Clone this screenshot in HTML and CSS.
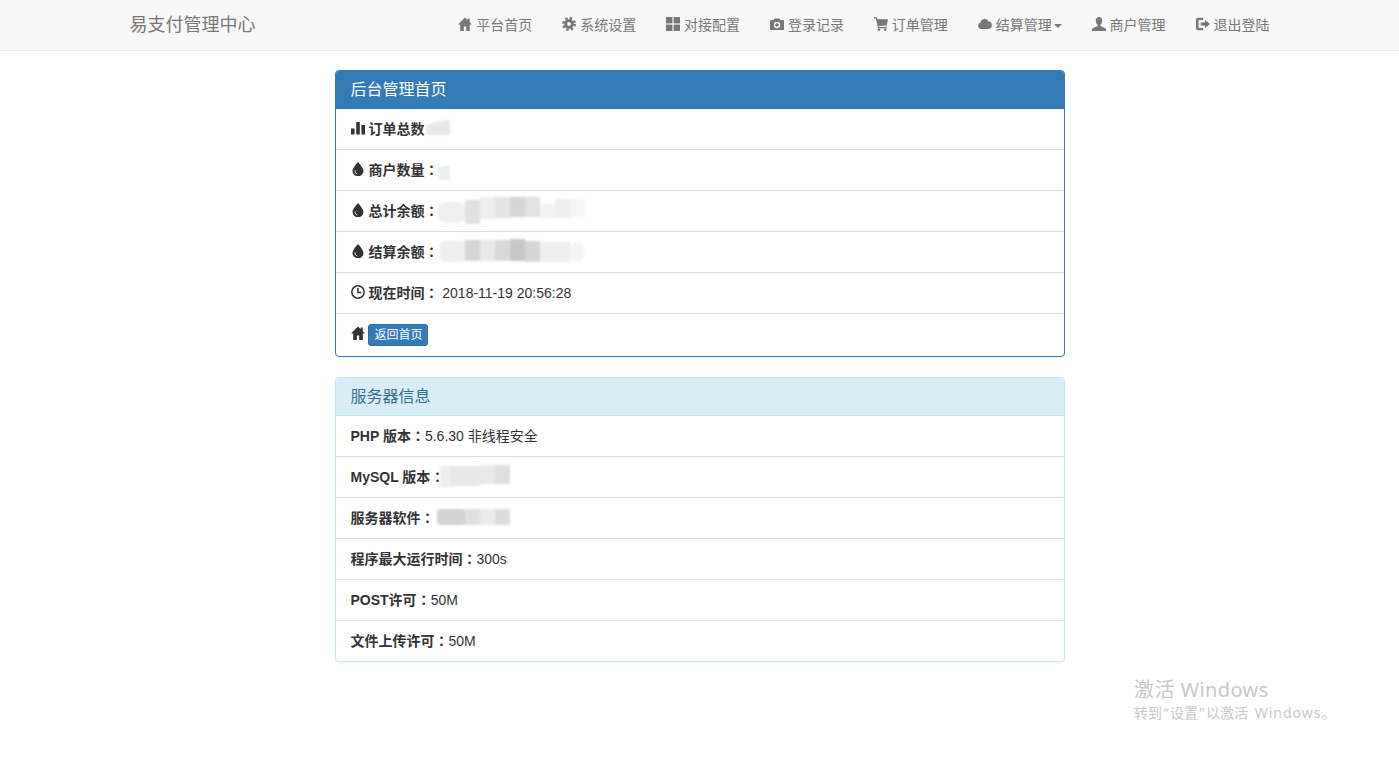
FILE: index.html
```html
<!DOCTYPE html>
<html lang="zh-CN">
<head>
<meta charset="utf-8">
<title>易支付管理中心</title>
<link rel="stylesheet" href="styles.css">
</head>
<body>
<svg class="defs" aria-hidden="true">
  <symbol id="i-home" viewBox="0 0 14 14"><path d="M7 .5 0 7.500h2.200V14h3.600V9.500h2.400V14h3.600V7.500H14l-2.300-2.300V1.500H9.700v1.700z"/></symbol>
  <symbol id="i-cog" viewBox="0 0 14 14"><circle cx="7" cy="7" r="3.400" fill="none" stroke="currentColor" stroke-width="2.900"/><circle cx="7" cy="7" r="5.700" fill="none" stroke="currentColor" stroke-width="2.500" stroke-dasharray="2.400 2.080"/></symbol>
  <symbol id="i-th" viewBox="0 0 14 14"><rect x="0" y="0" width="6.400" height="6.400"/><rect x="7.600" y="0" width="6.400" height="6.400"/><rect x="0" y="7.600" width="6.400" height="6.400"/><rect x="7.600" y="7.600" width="6.400" height="6.400"/></symbol>
  <symbol id="i-camera" viewBox="0 0 14 14"><path fill-rule="evenodd" d="M4.500 1.500h5l1 1.500H13a1 1 0 0 1 1 1v8a1 1 0 0 1-1 1H1a1 1 0 0 1-1-1V4a1 1 0 0 1 1-1h2.500zM7 4.800a3.200 3.200 0 1 0 0 6.400 3.200 3.200 0 0 0 0-6.400zm0 1.400a1.800 1.800 0 1 1 0 3.600 1.800 1.800 0 0 1 0-3.600z"/></symbol>
  <symbol id="i-cart" viewBox="0 0 14 14"><path d="M0 .3h2.800l.5 2H14l-1.400 6.500H4.900l.3 1.200h7.500v1.300H4.100L1.900 1.600H0z"/><circle cx="5" cy="12.700" r="1.300"/><circle cx="11.200" cy="12.700" r="1.300"/></symbol>
  <symbol id="i-cloud" viewBox="0 0 14 14"><path d="M3.300 12a3.300 3.300 0 0 1-.7-6.500 4.200 4.200 0 0 1 7.900-1.200 3.900 3.900 0 0 1 .1 7.700z"/></symbol>
  <symbol id="i-user" viewBox="0 0 14 14"><path d="M7 0C4.900 0 3.800 1.600 3.800 3.700c0 1.700.7 3.200 1.700 3.900v1.500L1.200 10.900C.5 11.200 0 11.800 0 12.500V14h14v-1.500c0-.7-.5-1.300-1.200-1.600L8.500 9.100V7.600c1-.7 1.700-2.200 1.700-3.900C10.200 1.600 9.100 0 7 0z"/></symbol>
  <symbol id="i-logout" viewBox="0 0 14 14"><path d="M1.800 .8H7.200v2.200H3.300a.8.8 0 0 0-.8.8v6.400c0 .4.300.8.800.8h3.900v2.200H1.800A1.800 1.800 0 0 1 0 11.400V2.600A1.800 1.800 0 0 1 1.800.8z"/><path d="M9 2.900 14 7l-5 4.100V8.500H4.800V5.500H9z"/></symbol>
  <symbol id="i-signal" viewBox="0 0 14 14"><rect x="0" y="7.500" width="3.600" height="6"/><rect x="5.200" y="1" width="3.600" height="12.500"/><rect x="10.400" y="4" width="3.600" height="9.500"/></symbol>
  <symbol id="i-tint" viewBox="0 0 14 14"><path d="M7 0S1.500 5.800 1.500 8.800a5.500 5.500 0 0 0 11 0C12.500 5.800 7 0 7 0z"/><path d="M4.200 8.400c-.4 1.800.5 3.200 2 3.600" fill="none" stroke="#fff" stroke-width="1"/></symbol>
  <symbol id="i-time" viewBox="0 0 14 14"><circle cx="7" cy="7" r="6.200" fill="none" stroke="currentColor" stroke-width="1.500"/><path d="M7 3v4.600h3.400" fill="none" stroke="currentColor" stroke-width="1.500"/></symbol>
</svg>

<nav class="navbar">
  <div class="navbar-inner">
    <a class="brand" href="#">易支付管理中心</a>
    <ul class="nav">
      <li><a href="#"><svg class="icon"><use href="#i-home"/></svg> 平台首页</a></li>
      <li><a href="#"><svg class="icon"><use href="#i-cog"/></svg> 系统设置</a></li>
      <li><a href="#"><svg class="icon"><use href="#i-th"/></svg> 对接配置</a></li>
      <li><a href="#"><svg class="icon"><use href="#i-camera"/></svg> 登录记录</a></li>
      <li><a href="#"><svg class="icon"><use href="#i-cart"/></svg> 订单管理</a></li>
      <li><a href="#"><svg class="icon"><use href="#i-cloud"/></svg> 结算管理<span class="caret"></span></a></li>
      <li><a href="#"><svg class="icon"><use href="#i-user"/></svg> 商户管理</a></li>
      <li><a href="#"><svg class="icon"><use href="#i-logout"/></svg> 退出登陆</a></li>
    </ul>
  </div>
</nav>

<main class="content">
  <section class="panel panel-primary">
    <h3 class="panel-heading">后台管理首页</h3>
    <ul class="list">
      <li class="row"><svg class="icon"><use href="#i-signal"/></svg> <b>订单总数</b>
        <svg class="redact" viewBox="426 0 270 41"><path d="M425 22 427 16Q436 12 450 11V26H427z" fill="#e6e9e9"/></svg></li>
      <li class="row"><svg class="icon"><use href="#i-tint"/></svg> <b>商户数量<span class="colon">：</span></b>
        <svg class="redact" viewBox="426 0 270 41"><path d="M437 17 450 15V30H440z" fill="#eceeee"/></svg></li>
      <li class="row"><svg class="icon"><use href="#i-tint"/></svg> <b>总计余额<span class="colon">：</span></b>
        <svg class="redact" viewBox="426 0 270 41">
          <rect x="437" y="11" width="30" height="21" rx="10" fill="#f0f0f0"/>
          <rect x="465" y="9" width="15" height="24" fill="#e0e0e0"/>
          <rect x="480" y="6" width="15" height="22" fill="#eeeeee"/>
          <rect x="495" y="6" width="15" height="21" fill="#e3e3e3"/>
          <rect x="510" y="6" width="15" height="20" fill="#d6d6d6"/>
          <rect x="525" y="6" width="15" height="20" fill="#e2e2e2"/>
          <rect x="540" y="13" width="15" height="14" fill="#f2f2f2"/>
          <rect x="555" y="8" width="15" height="19" fill="#efefef"/>
          <rect x="570" y="8" width="15" height="18" fill="#f6f6f6"/>
        </svg></li>
      <li class="row"><svg class="icon"><use href="#i-tint"/></svg> <b>结算余额<span class="colon">：</span></b>
        <svg class="redact" viewBox="426 0 270 41">
          <rect x="440" y="9" width="27" height="21" rx="6" fill="#efefef"/>
          <rect x="465" y="8" width="15" height="21" fill="#d6d6d6"/>
          <rect x="480" y="8" width="15" height="21" fill="#e8e8e8"/>
          <rect x="495" y="8" width="15" height="21" fill="#d9d9d9"/>
          <rect x="510" y="7" width="15" height="22" fill="#c8c8c8"/>
          <rect x="525" y="9" width="15" height="21" fill="#d6d6d6"/>
          <rect x="540" y="10" width="30" height="20" fill="#eeeeee"/>
          <rect x="570" y="11" width="14" height="18" rx="6" fill="#f5f5f5"/>
        </svg></li>
      <li class="row"><svg class="icon"><use href="#i-time"/></svg> <b>现在时间<span class="colon">：</span></b> 2018-11-19 20:56:28</li>
      <li class="row row-action"><svg class="icon"><use href="#i-home"/></svg> <a class="btn" href="#">返回首页</a></li>
    </ul>
  </section>

  <section class="panel panel-info">
    <h3 class="panel-heading">服务器信息</h3>
    <ul class="list">
      <li class="row"><b>PHP 版本<span class="colon">：</span></b>5.6.30 非线程安全</li>
      <li class="row"><b>MySQL 版本<span class="colon">：</span></b>
        <svg class="redact" viewBox="426 0 270 41">
          <rect x="440" y="9" width="12" height="21" fill="#eeeeee"/>
          <rect x="450" y="9" width="30" height="20" fill="#e7e7e7"/>
          <rect x="480" y="8" width="15" height="19" fill="#e9e9e9"/>
          <rect x="495" y="8" width="15" height="19" fill="#dedede"/>
        </svg></li>
      <li class="row"><b>服务器软件<span class="colon">：</span></b>
        <svg class="redact" viewBox="426 0 270 41">
          <rect x="437" y="11" width="29" height="16" rx="4" fill="#d2d2d2"/>
          <rect x="465" y="11" width="15" height="16" fill="#e0e0e0"/>
          <rect x="480" y="11" width="15" height="16" fill="#ebebeb"/>
          <rect x="495" y="11" width="15" height="16" fill="#dddddd"/>
        </svg></li>
      <li class="row"><b>程序最大运行时间<span class="colon">：</span></b>300s</li>
      <li class="row"><b>POST许可<span class="colon">：</span></b>50M</li>
      <li class="row"><b>文件上传许可<span class="colon">：</span></b>50M</li>
    </ul>
  </section>
</main>

<aside class="watermark">
  <div class="wm-title">激活 Windows</div>
  <div class="wm-sub">转到<span class="wm-quote">“</span>设置<span class="wm-quote">”</span>以激活 <span class="wm-word">Windows</span>。</div>
</aside>
</body>
</html>
```
FILE: styles.css
```css
* { box-sizing: border-box; }
html, body { margin: 0; padding: 0; }
body {
  position: relative;
  min-height: 764px;
  background: #fff;
  color: #333;
  font: 14px/20px "Liberation Sans", "Noto Sans CJK SC", sans-serif;
}
a { text-decoration: none; color: inherit; }
ul { list-style: none; margin: 0; padding: 0; }
.defs { position: absolute; width: 0; height: 0; overflow: hidden; }

.icon {
  display: inline-block;
  width: 14px;
  height: 14px;
  fill: currentColor;
  vertical-align: -1px;
}

.navbar {
  height: 51px;
  background: #f8f8f8;
  border-bottom: 1px solid #e7e7e7;
  color: #777;
}
.navbar-inner {
  display: flex;
  justify-content: space-between;
  width: 1170px;
  height: 50px;
  margin: 0 auto;
}
.brand {
  padding: 15px;
  font-size: 18px;
  line-height: 20px;
}
.nav { display: flex; }
.nav a {
  display: block;
  height: 50px;
  padding: 15px;
  line-height: 20px;
}
.caret {
  display: inline-block;
  width: 0;
  height: 0;
  margin-left: 2px;
  vertical-align: middle;
  border-top: 4px solid;
  border-left: 4px solid transparent;
  border-right: 4px solid transparent;
}

.content {
  width: 730px;
  margin: 19px auto 0;
}
.panel {
  margin-bottom: 20px;
  background: #fff;
  border: 1px solid;
  border-radius: 4px;
  box-shadow: 0 1px 1px rgba(0, 0, 0, .05);
  overflow: hidden;
}
.panel-primary { border-color: #337ab7; }
.panel-info { border-color: #bce8f1; }
.panel-heading {
  margin: 0;
  padding: 10px 15px;
  height: 38px;
  font-size: 16px;
  font-weight: 400;
  line-height: 18px;
}
.panel-primary .panel-heading { background: #337ab7; color: #fff; }
.panel-info .panel-heading {
  background: #d9edf7;
  color: #31708f;
  border-bottom: 1px solid #bce8f1;
}
.row {
  position: relative;
  height: 41px;
  padding: 10px 15px;
  line-height: 20px;
  border-top: 1px solid #ddd;
}
.row:first-child { height: 40px; border-top: 0; }
.row-action { height: 43px; }
b { font-weight: 700; }
.colon {
  font-family: "Noto Sans CJK TC", sans-serif;
  font-feature-settings: "locl" 0;
  line-height: 0;
}

.btn {
  display: inline-block;
  padding: 1px 5px;
  font-size: 12px;
  line-height: 18px;
  color: #fff;
  background: #337ab7;
  border: 1px solid #2e6da4;
  border-radius: 3px;
  vertical-align: middle;
}

.redact {
  position: absolute;
  left: 90px;
  top: 0;
  width: 270px;
  height: 41px;
  filter: blur(0.8px);
}

.watermark {
  position: absolute;
  left: 1134px;
  top: 677px;
  color: #c9c9c9;
  font-family: "Noto Sans", "Noto Sans CJK SC", sans-serif;
}
.wm-title { font-size: 20px; line-height: 26px; letter-spacing: .4px; }
.wm-sub { font-size: 14px; line-height: 20px; }
.wm-quote { margin: 0 1.5px; }
.wm-word { margin-left: 3px; letter-spacing: 1px; }
```
